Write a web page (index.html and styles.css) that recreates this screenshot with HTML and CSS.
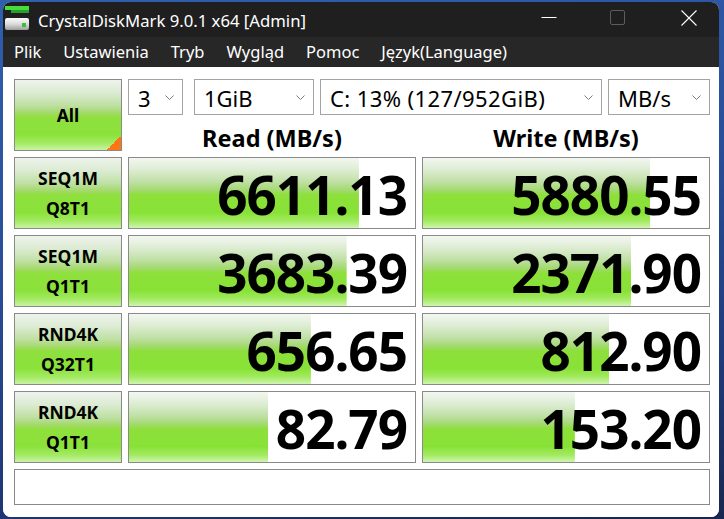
FILE: index.html
```html
<!DOCTYPE html>
<html lang="pl">
<head>
<meta charset="utf-8">
<title>CrystalDiskMark</title>
<link rel="stylesheet" href="styles.css">
</head>
<body>
<div class="window">
  <div class="titlebar">
    <svg class="app-icon" width="24" height="24" viewBox="0 0 24 24">
      <defs>
        <linearGradient id="disk" x1="0" y1="0" x2="0" y2="1">
          <stop offset="0" stop-color="#fbfbfb"/>
          <stop offset="0.5" stop-color="#dcdcdc"/>
          <stop offset="1" stop-color="#9c9c9c"/>
        </linearGradient>
      </defs>
      <rect x="0" y="0" width="24" height="4" fill="#45dc3c"/>
      <rect x="6" y="4" width="18" height="3" fill="#27a02e"/>
      <rect x="0" y="12" width="24" height="12" rx="2" fill="url(#disk)"/>
      <rect x="17" y="17" width="4" height="4" fill="#35c23a"/>
    </svg>
    <span class="title">CrystalDiskMark 9.0.1 x64 [Admin]</span>
    <div class="caption">
      <svg class="cap-icon cap-min" width="16" height="16" viewBox="0 0 16 16"><path d="M0.5 7.5H15.5" stroke="#ffffff" stroke-width="1"/></svg>
      <svg class="cap-icon cap-max" width="16" height="16" viewBox="0 0 16 16"><rect x="0.5" y="0.5" width="14" height="14" rx="1.5" fill="none" stroke="#5c5c5c" stroke-width="1"/></svg>
      <svg class="cap-icon cap-close" width="16" height="16" viewBox="0 0 16 16"><path d="M0.5 0.5L15.5 15.5M15.5 0.5L0.5 15.5" stroke="#ffffff" stroke-width="1.1"/></svg>
    </div>
  </div>
  <div class="menubar">
    <span class="menu-item">Plik</span>
    <span class="menu-item">Ustawienia</span>
    <span class="menu-item">Tryb</span>
    <span class="menu-item">Wygląd</span>
    <span class="menu-item">Pomoc</span>
    <span class="menu-item">Język(Language)</span>
  </div>
  <div class="content">
    <div class="grid">
      <div class="tile all">All</div>
      <div class="controls">
        <div class="selects">
          <div class="select s-count"><span>3</span><svg class="chev" width="9" height="5" viewBox="0 0 9 5"><path d="M0.5 0.5L4.5 4.5L8.5 0.5" fill="none" stroke="#7a7a7a"/></svg></div>
          <div class="select s-size"><span>1GiB</span><svg class="chev" width="9" height="5" viewBox="0 0 9 5"><path d="M0.5 0.5L4.5 4.5L8.5 0.5" fill="none" stroke="#7a7a7a"/></svg></div>
          <div class="select s-drive"><span>C: 13% (127/952GiB)</span><svg class="chev" width="9" height="5" viewBox="0 0 9 5"><path d="M0.5 0.5L4.5 4.5L8.5 0.5" fill="none" stroke="#7a7a7a"/></svg></div>
          <div class="select s-unit"><span>MB/s</span><svg class="chev" width="9" height="5" viewBox="0 0 9 5"><path d="M0.5 0.5L4.5 4.5L8.5 0.5" fill="none" stroke="#7a7a7a"/></svg></div>
        </div>
        <div class="headers">
          <div class="head">Read (MB/s)</div>
          <div class="head">Write (MB/s)</div>
        </div>
      </div>

      <div class="tile label">SEQ1M<br>Q8T1</div>
      <div class="meter" style="--w:80.4%">6611.13</div>
      <div class="meter" style="--w:79.5%">5880.55</div>

      <div class="tile label">SEQ1M<br>Q1T1</div>
      <div class="meter" style="--w:76.1%">3683.39</div>
      <div class="meter" style="--w:72.9%">2371.90</div>

      <div class="tile label">RND4K<br>Q32T1</div>
      <div class="meter" style="--w:63.6%">656.65</div>
      <div class="meter" style="--w:65.2%">812.90</div>

      <div class="tile label">RND4K<br>Q1T1</div>
      <div class="meter" style="--w:48.6%">82.79</div>
      <div class="meter" style="--w:53.1%">153.20</div>

      <div class="comment"></div>
    </div>
  </div>
</div>
</body>
</html>
```

FILE: styles.css
```css
html, body {
  margin: 0;
  padding: 0;
}

body {
  width: 724px;
  height: 519px;
  overflow: hidden;
  background: linear-gradient(170deg, #2f5fae 0%, #2a4f9a 40%, #1f3a7a 75%, #18264e 100%);
  font-family: "Noto Sans", "Open Sans", sans-serif;
}

.window {
  margin: 2px 5px 0 3px;
  height: 515px;
  border-radius: 8px;
  overflow: hidden;
  display: flex;
  flex-direction: column;
  background: #ffffff;
}

.titlebar {
  height: 35px;
  flex: none;
  display: flex;
  align-items: center;
  background: #1f1f1f;
  color: #ffffff;
}

.app-icon {
  margin-left: 2px;
  margin-top: -4px;
  flex: none;
}

.title {
  margin-left: 9px;
  font-size: 16.7px;
  line-height: 35px;
  padding-top: 2px;
}

.caption {
  margin-left: auto;
  display: flex;
  align-items: center;
  padding-right: 22px;
  margin-top: -3px;
}

.cap-icon {
  display: block;
}

.cap-max {
  margin-left: 53px;
}

.cap-close {
  margin-left: 55px;
}

.menubar {
  height: 30px;
  flex: none;
  display: flex;
  gap: 22px;
  padding-left: 11px;
  background: #272727;
  color: #ffffff;
  font-size: 16.5px;
  line-height: 30px;
}

.content {
  flex: 1;
  background: #ffffff;
  padding: 12px 0 0 11px;
}

.grid {
  display: grid;
  grid-template-columns: 108px 288px 288px;
  grid-template-rows: 72px 72px 72px 72px 72px 36px;
  column-gap: 6px;
  row-gap: 6px;
}

.tile {
  box-sizing: border-box;
  border: 1px solid #8a8a8a;
  font-weight: 700;
  font-size: 17.5px;
  color: #000000;
  text-align: center;
  background: linear-gradient(to bottom, #eef3ec 0%, #dcebd3 18%, #bfe0a3 36%, #a3d96b 47%, #8fe03d 53%, #8be23a 78%, #a3ea63 90%, #c9f3a5 100%);
}

.all {
  line-height: 70px;
  background:
    linear-gradient(to top left, #ff7514 50%, rgba(255, 117, 20, 0) 50%) right bottom / 14px 14px no-repeat,
    linear-gradient(to bottom, #eef3ec 0%, #dcebd3 18%, #bfe0a3 36%, #a3d96b 47%, #8fe03d 53%, #8be23a 78%, #a3ea63 90%, #c9f3a5 100%);
}

.label {
  line-height: 30px;
  padding-top: 5px;
}

.controls {
  grid-column: 2 / 4;
  display: flex;
  flex-direction: column;
}

.selects {
  display: flex;
  height: 36px;
}

.select {
  box-sizing: border-box;
  height: 36px;
  border: 1px solid #a3a3a3;
  background: #ffffff;
  display: flex;
  align-items: center;
  padding: 2px 8px 0 9px;
  font-size: 22px;
  color: #000000;
  margin-right: 6px;
}

.select span {
  flex: 1;
  white-space: nowrap;
}

.chev {
  flex: none;
  margin-top: -2px;
}

.s-count { width: 55px; margin-right: 11px; }
.s-size { width: 120px; }
.s-drive { width: 282px; }
.s-drive span { letter-spacing: 0.4px; }
.s-unit { width: 102px; margin-right: 0; }

.headers {
  display: flex;
  gap: 6px;
}

.head {
  width: 288px;
  text-align: center;
  font-weight: 700;
  font-size: 23.5px;
  line-height: 26px;
  padding-top: 10px;
  color: #000000;
}

.meter {
  box-sizing: border-box;
  border: 1px solid #8a8a8a;
  background:
    linear-gradient(to bottom, #f3f7f1 0%, #deedd5 16%, #c0e0a5 34%, #a3d970 46%, #8de03a 53%, #88e236 78%, #a2ea60 90%, #cff5b1 100%) left top / var(--w) 100% no-repeat,
    #ffffff;
  text-align: right;
  font-weight: 700;
  font-size: 53px;
  letter-spacing: -1px;
  line-height: 66px;
  padding: 4px 8px 0 0;
  color: #000000;
}

.comment {
  grid-column: 1 / 4;
  box-sizing: border-box;
  border: 1px solid #8a8a8a;
  background: #ffffff;
}
```
